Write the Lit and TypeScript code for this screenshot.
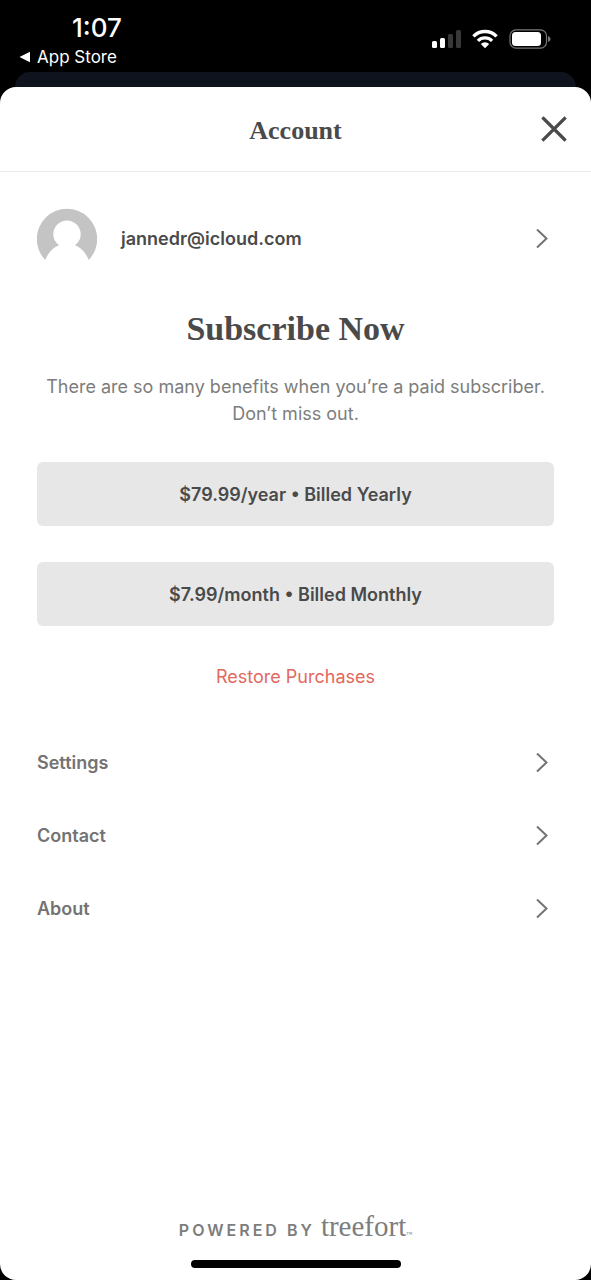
import { LitElement, html, svg, css } from "lit";
import { customElement } from "lit/decorators.js";

const chevron = html`<svg class="chevron" viewBox="0 0 12 20" width="12" height="20" aria-hidden="true">
  <path d="M1 0.5 L10.5 9.5 L1 18.5" fill="none" stroke="currentColor" stroke-width="2" />
</svg>`;

@customElement("app-root")
export class AppRoot extends LitElement {
  static styles = css`
    :host {
      display: flex;
      flex-direction: column;
      min-height: 100vh;
      background: #000;
      color: #4a4a4a;
      font-family: Inter, "Liberation Sans", sans-serif;
      font-size: 18px;
      line-height: 27px;
    }
    * {
      box-sizing: border-box;
    }
    h1, h2, p, ul {
      margin: 0;
      padding: 0;
      font-weight: 400;
    }
    button {
      border: 0;
      padding: 0;
      background: none;
      color: inherit;
      font: inherit;
      cursor: pointer;
    }
    a {
      color: inherit;
      text-decoration: none;
    }
    svg {
      display: block;
      flex: none;
    }
    .status {
      display: flex;
      justify-content: space-between;
      height: 72px;
      padding: 12px 40px 0 19px;
      color: #fff;
    }
    .clock {
      padding-left: 53px;
      font-size: 26px;
      line-height: 32px;
      font-weight: 500;
    }
    .back {
      display: flex;
      align-items: center;
      gap: 6px;
      font-size: 17px;
      line-height: 26px;
    }
    .indicators {
      display: flex;
      align-items: center;
      gap: 11px;
      height: 22px;
      margin-top: 16px;
    }
    .behind {
      height: 15px;
      margin: 0 15px;
      border-radius: 15px 15px 0 0;
      background: #0e131d;
    }
    .sheet {
      display: flex;
      flex: 1;
      flex-direction: column;
      border-radius: 16px;
      background: #fff;
    }
    .header {
      display: grid;
      grid-template-columns: 44px 1fr 44px;
      align-items: center;
      height: 85px;
      padding: 0 15px;
      border-bottom: 1px solid #ebebeb;
    }
    .title {
      grid-column: 2;
      padding-top: 4px;
      text-align: center;
      font-family: "Liberation Serif", serif;
      font-size: 26px;
      line-height: 32px;
      font-weight: 700;
    }
    .close {
      display: grid;
      place-items: center;
      height: 44px;
    }
    .content {
      display: flex;
      flex: 1;
      flex-direction: column;
      padding: 36px 37px 0;
    }
    .account {
      display: flex;
      align-items: center;
      gap: 24px;
      padding-right: 6px;
      font-weight: 600;
    }
    .email {
      flex: 1;
    }
    .chevron {
      color: #737373;
    }
    .subscribe {
      display: flex;
      flex-direction: column;
      margin-top: 40px;
      text-align: center;
    }
    .headline {
      font-family: "Liberation Serif", serif;
      font-size: 34px;
      line-height: 40px;
      font-weight: 700;
    }
    .lead {
      margin: 24px 0 35px;
      color: #7d7d7d;
    }
    .plans {
      display: grid;
      gap: 36px;
    }
    .plan {
      height: 64px;
      border-radius: 6px;
      background: #e7e7e7;
      font-weight: 600;
    }
    .restore {
      align-self: center;
      margin-top: 37px;
      color: #e2695d;
    }
    .links {
      margin-top: 36px;
      list-style: none;
    }
    .link {
      display: flex;
      align-items: center;
      justify-content: space-between;
      height: 73px;
      padding-right: 6px;
      color: #737373;
      font-weight: 600;
    }
    .footer {
      display: flex;
      flex-direction: column;
      align-items: center;
      gap: 12px;
      padding-bottom: 12px;
      color: #7d7d7d;
    }
    .powered {
      display: flex;
      align-items: baseline;
      gap: 6px;
      font-size: 16px;
      line-height: 28px;
      font-weight: 600;
    }
    .by {
      letter-spacing: 3px;
    }
    .brand {
      font-family: "Liberation Serif", serif;
      font-size: 29px;
      font-weight: 400;
    }
    .tm {
      font-size: 6px;
    }
    .home {
      width: 210px;
      height: 8px;
      border-radius: 4px;
      background: #000;
    }
  `;

  private plans = ["$79.99/year • Billed Yearly", "$7.99/month • Billed Monthly"];
  private links = ["Settings", "Contact", "About"];

  render() {
    return html`
      <div class="status">
        <div>
          <div class="clock">1:07</div>
          <a class="back" href="#">
            <svg width="12" height="12" viewBox="0 0 12 12" aria-hidden="true">
              <path d="M0.5 6 L11 0.8 V11.2 Z" fill="#fff" />
            </svg>
            App Store
          </a>
        </div>
        <div class="indicators">
          <svg width="30" height="20" viewBox="0 0 30 20" aria-hidden="true">
            ${[
              [1, 12, 7, 1],
              [9, 9, 10, 1],
              [17, 5, 14, 0.22],
              [25, 1, 18, 0.22],
            ].map(
              ([x, y, h, o]) =>
                svg`<rect x=${x} y=${y} width="5" height=${h} rx="1.5" fill="#fff" fill-opacity=${o} />`
            )}
          </svg>
          <svg width="26" height="20" viewBox="0 0 26 20" aria-hidden="true">
            <g fill="none" stroke="#fff" stroke-width="3.3">
              <path d="M1.4 7.3 A16.4 16.4 0 0 1 24.6 7.3" />
              <path d="M5.9 11.9 A10 10 0 0 1 20.1 11.9" />
            </g>
            <path d="M8.8 15 A6 6 0 0 1 17.2 15 L13 19.2 Z" fill="#fff" />
          </svg>
          <svg width="42" height="20" viewBox="0 0 42 20" aria-hidden="true">
            <rect x="1" y="0.8" width="36.5" height="18.4" rx="6" fill="none" stroke="#777" stroke-width="1.2" />
            <rect x="3" y="3" width="29" height="14" rx="3.5" fill="#fff" />
            <path d="M39 7 Q41.6 8 41.6 10 T39 13 Z" fill="#777" />
          </svg>
        </div>
      </div>
      <div class="behind"></div>
      <main class="sheet">
        <header class="header">
          <h1 class="title">Account</h1>
          <button class="close" aria-label="Close">
            <svg width="26" height="26" viewBox="0 0 26 26" aria-hidden="true">
              <path d="M2.5 2.5 L23.5 23.5 M23.5 2.5 L2.5 23.5" stroke="#4a4a4a" stroke-width="3.2" stroke-linecap="square" />
            </svg>
          </button>
        </header>
        <div class="content">
          <a class="account" href="#">
            <svg width="60" height="61" viewBox="0 0 60 61" aria-hidden="true">
              <path d="M8.3 52 A30.2 30.2 0 1 1 51.7 52 Q47.5 41 38 37.3 A13.7 13.7 0 1 0 22 37.3 Q12.5 41 8.3 52 Z" fill="#c4c4c4" />
            </svg>
            <span class="email">jannedr@icloud.com</span>
            ${chevron}
          </a>
          <section class="subscribe">
            <h2 class="headline">Subscribe Now</h2>
            <p class="lead">There are so many benefits when you’re a paid subscriber. Don’t miss out.</p>
            <div class="plans">
              ${this.plans.map((p) => html`<button class="plan">${p}</button>`)}
            </div>
            <button class="restore">Restore Purchases</button>
          </section>
          <ul class="links">
            ${this.links.map((l) => html`<li><a class="link" href="#">${l}${chevron}</a></li>`)}
          </ul>
        </div>
        <footer class="footer">
          <div class="powered">
            <span class="by">POWERED BY</span>
            <span class="brand">treefort<span class="tm">™</span></span>
          </div>
          <div class="home"></div>
        </footer>
      </main>
    `;
  }
}
